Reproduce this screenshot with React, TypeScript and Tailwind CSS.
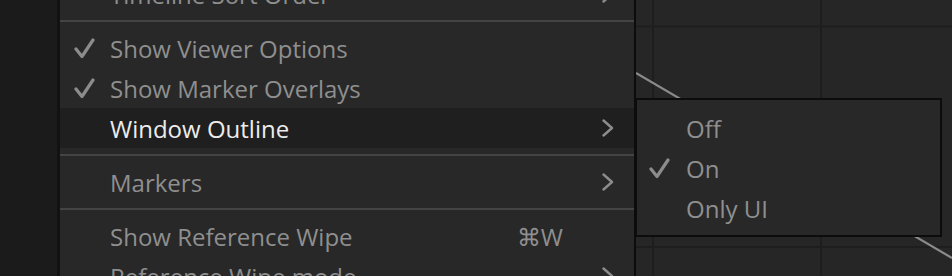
import React from "react";

type MenuRow =
  | { kind: "item"; label: string; checked?: boolean; active?: boolean; submenu?: boolean; shortcut?: string }
  | { kind: "sep" };

const mainRows: MenuRow[] = [
  { kind: "item", label: "Timeline Sort Order", submenu: true },
  { kind: "sep" },
  { kind: "item", label: "Show Viewer Options", checked: true },
  { kind: "item", label: "Show Marker Overlays", checked: true },
  { kind: "item", label: "Window Outline", active: true, submenu: true },
  { kind: "sep" },
  { kind: "item", label: "Markers", submenu: true },
  { kind: "sep" },
  { kind: "item", label: "Show Reference Wipe", shortcut: "⌘W" },
  { kind: "item", label: "Reference Wipe mode", submenu: true },
];

const subRows = [
  { label: "Off", checked: false },
  { label: "On", checked: true },
  { label: "Only UI", checked: false },
];

const Check = () => (
  <svg width="22" height="22" viewBox="0 0 22 22" className="text-[#8c8c8c]">
    <polyline
      points="2,12 8,19.5 19,3"
      fill="none"
      stroke="currentColor"
      strokeWidth="3.2"
      strokeLinecap="round"
      strokeLinejoin="round"
    />
  </svg>
);

const Chevron = () => (
  <svg width="14" height="18" viewBox="0 0 14 18" className="text-[#8c8c8c]">
    <polyline
      points="2.5,1.5 11,9 2.5,16.5"
      fill="none"
      stroke="currentColor"
      strokeWidth="2.4"
      strokeLinecap="round"
      strokeLinejoin="round"
    />
  </svg>
);

const Canvas = () => (
  <svg width="316" height="276" viewBox="0 0 316 276" className="block">
    <rect width="316" height="276" fill="#262626" />
    <line x1="17" y1="0" x2="17" y2="276" stroke="#1e1e1e" strokeWidth="2" />
    <line x1="185" y1="0" x2="185" y2="276" stroke="#1e1e1e" strokeWidth="2" />
    <line x1="0" y1="26.5" x2="316" y2="26.5" stroke="#1e1e1e" strokeWidth="2" />
    <line x1="0" y1="247" x2="316" y2="247" stroke="#1e1e1e" strokeWidth="2" />
    <line x1="0" y1="73" x2="316" y2="258" stroke="#8a8a8a" strokeWidth="2.2" />
  </svg>
);

export default function App() {
  return (
    <div
      className="relative w-[952px] h-[276px] overflow-hidden bg-[#1b1b1b] flex"
      style={{ fontFamily: '"Open Sans", "Noto Sans", sans-serif' }}
    >
      <div className="w-[57px] shrink-0 bg-[#1b1b1b]" />
      <div className="w-[3px] shrink-0 bg-[#121212]" />
      {/* main menu */}
      <div className="w-[576px] shrink-0 bg-[#282828] border-r-2 border-[#0c0c0c] relative">
        <div className="flex flex-col mt-[-26px]">
          {mainRows.map((row, i) =>
            row.kind === "sep" ? (
              <div key={i} className="py-[6px]">
                <div className="h-[2px] bg-[#444444]" />
              </div>
            ) : (
              <div
                key={i}
                className={`h-[40px] shrink-0 flex items-center ${row.active ? "bg-[#1f1f1f]" : ""}`}
              >
                <div className="w-[50px] shrink-0 flex justify-end pr-[14px]">
                  {row.checked && <Check />}
                </div>
                <span
                  className={`text-[24px] leading-none pt-[1px] ${row.active ? "text-[#ececec]" : "text-[#8f8f8f]"}`}
                >
                  {row.label}
                </span>
                <div className="flex-1" />
                {row.shortcut && (
                  <span className="text-[24px] leading-none pt-[1px] text-[#8f8f8f] mr-[71px]">
                    {row.shortcut}
                  </span>
                )}
                {row.submenu && (
                  <div className="mr-[19px] flex items-center">
                    <Chevron />
                  </div>
                )}
              </div>
            )
          )}
        </div>
      </div>
      <div className="flex-1">
        <Canvas />
      </div>

      {/* submenu */}
      <div className="absolute left-[635px] top-[98px] w-[307px] h-[139px] bg-[#282828] border-2 border-[#0c0c0c] pt-[8px]">
        {subRows.map((r) => (
          <div key={r.label} className="h-[40px] flex items-center">
            <div className="w-[49px] shrink-0 flex justify-end pr-[15px]">
              {r.checked && <Check />}
            </div>
            <span className="text-[24px] leading-none pt-[1px] text-[#8f8f8f]">{r.label}</span>
          </div>
        ))}
      </div>
    </div>
  );
}
